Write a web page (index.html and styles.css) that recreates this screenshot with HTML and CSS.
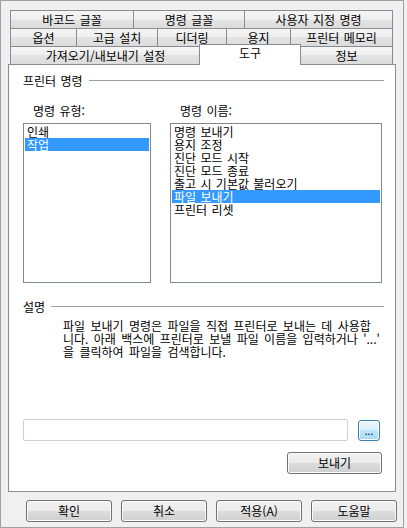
FILE: index.html
```html
<!DOCTYPE html>
<html lang="ko">
  <head>
    <meta charset="UTF-8" />
    <meta name="viewport" content="width=device-width, initial-scale=1.0" />
    <title>프린터 속성 - 도구</title>
    <link rel="stylesheet" href="styles.css">
  </head>
  <body>
    <div class="dialog">
      <div class="tabs">
        <div class="tab-row">
          <div class="tab tab-barcode">바코드 글꼴</div>
          <div class="tab tab-cmdfont">명령 글꼴</div>
          <div class="tab tab-custom">사용자 지정 명령</div>
        </div>
        <div class="tab-row">
          <div class="tab tab-options">옵션</div>
          <div class="tab tab-advanced">고급 설치</div>
          <div class="tab tab-dither">디더링</div>
          <div class="tab tab-paper">용지</div>
          <div class="tab tab-memory">프린터 메모리</div>
        </div>
        <div class="tab-row">
          <div class="tab tab-import">가져오기/내보내기 설정</div>
          <div class="tab tab-tools active">도구</div>
          <div class="tab tab-info">정보</div>
        </div>
      </div>

      <div class="panel">
        <div class="group-title">프린터 명령</div>
        <div class="commands">
          <div class="col-type">
            <div class="field-label">명령 유형:</div>
            <div class="listbox">
              <div>인쇄</div>
              <div class="selected">작업</div>
            </div>
          </div>
          <div class="col-name">
            <div class="field-label">명령 이름:</div>
            <div class="listbox">
              <div>명령 보내기</div>
              <div>용지 조정</div>
              <div>진단 모드 시작</div>
              <div>진단 모드 종료</div>
              <div>출고 시 기본값 불러오기</div>
              <div class="selected">파일 보내기</div>
              <div>프린터 리셋</div>
            </div>
          </div>
        </div>

        <div class="group-title group-desc">설명</div>
        <p class="description">파일 보내기 명령은 파일을 직접 프린터로 보내는 데 사용합<br>니다. 아래 백스에 프린터로 보낼 파일 이름을 입력하거나 '...'<br>을 클릭하여 파일을 검색합니다.</p>

        <div class="file-row">
          <div class="file-input"></div>
          <button class="btn btn-browse">...</button>
        </div>
        <div class="send-row">
          <button class="btn btn-send">보내기</button>
        </div>
      </div>

      <div class="footer">
        <button class="btn btn-footer">확인</button>
        <button class="btn btn-footer">취소</button>
        <button class="btn btn-footer">적용(A)</button>
        <button class="btn btn-footer">도움말</button>
      </div>
    </div>
  </body>
</html>
```

FILE: styles.css
```css
body {
  margin: 0;
  background: #f0f0f0;
  font-family: "Noto Sans CJK KR", "Noto Sans", sans-serif;
  font-size: 12px;
  color: #000;
}
.dialog {
  width: 404px;
  height: 528px;
  box-sizing: border-box;
  border: 1px solid #a0a0a0;
  padding: 9px 7px 0 7px;
  background: #f0f0f0;
}

/* tabs */
.tabs {
  margin: 0 3px 0 2px;
}
.tab-row {
  display: flex;
  height: 18px;
}
.tab {
  box-sizing: border-box;
  height: 18px;
  margin-left: -1px;
  border: 1px solid #898c95;
  border-bottom: none;
  background: linear-gradient(#f5f5f5, #eeeeee 50%, #e3e3e3 50%, #dcdcdc);
  text-align: center;
  line-height: 17px;
  white-space: nowrap;
  word-spacing: 1px;
}
.tab:first-child {
  margin-left: 0;
}
.tab-barcode { width: 124px; }
.tab-cmdfont { width: 112px; }
.tab-custom { width: 149px; }
.tab-options { width: 67px; }
.tab-advanced { width: 82px; }
.tab-dither { width: 70px; }
.tab-paper { width: 65px; }
.tab-memory { width: 103px; }
.tab-import { width: 191px; }
.tab-tools { width: 102px; }
.tab-info { width: 93px; }
.tab.active {
  position: relative;
  top: 1px;
  z-index: 1;
  align-self: flex-end;
  height: 21px;
  margin-left: -2px;
  background: #fff;
  line-height: 15px;
}

/* panel */
.panel {
  box-sizing: border-box;
  height: 428px;
  border: 1px solid #898c95;
  background: #fff;
  padding: 9px 11px 0 14px;
}
.group-title {
  display: flex;
  align-items: center;
  height: 13px;
  line-height: 13px;
  white-space: nowrap;
  word-spacing: 1px;
}
.group-title::after {
  content: "";
  flex: 1;
  margin-left: 6px;
  border-top: 1px solid #a0a0a0;
}
.commands {
  display: flex;
  gap: 19px;
  margin-top: 17px;
}
.col-type {
  width: 128px;
}
.col-name {
  width: 212px;
}
.field-label {
  height: 13px;
  line-height: 13px;
  padding-left: 10px;
  margin-bottom: 6px;
  word-spacing: 1px;
}
.listbox {
  box-sizing: border-box;
  height: 160px;
  padding: 1px;
  border: 1px solid #828790;
}
.listbox div {
  height: 13px;
  line-height: 13px;
  padding-left: 2px;
  white-space: nowrap;
  word-spacing: 1px;
}
.listbox .selected {
  background: #3399ff;
  color: #fff;
}
.group-desc {
  margin-top: 17px;
}
.description {
  margin: 6px 0 0 0;
  padding-left: 40px;
  line-height: 13px;
  white-space: nowrap;
  word-spacing: 2px;
}

/* file + send */
.file-row {
  display: flex;
  align-items: flex-start;
  margin-top: 61px;
}
.file-input {
  box-sizing: border-box;
  width: 325px;
  height: 22px;
  border: 1px solid #d0d0d0;
  border-radius: 2px;
  background: #fff;
}
.btn {
  box-sizing: border-box;
  padding: 0;
  border: 1px solid #707070;
  border-radius: 3px;
  background: linear-gradient(#f2f2f2, #ebebeb 50%, #dddddd 50%, #cfcfcf);
  box-shadow: inset 0 0 0 1px #fbfbfb;
  font: inherit;
  color: #000;
  text-align: center;
  line-height: 18px;
}
.btn-browse {
  width: 22px;
  height: 21px;
  margin: 1px 0 0 10px;
  border-color: #3c7fb1;
  background: linear-gradient(#eaf6fd, #d9f0fc 50%, #bee6fd 50%, #a7d9f5);
  font-size: 10px;
  line-height: 16px;
}
.send-row {
  display: flex;
  justify-content: flex-end;
  margin: 11px 2px 0 0;
}
.btn-send {
  width: 95px;
  height: 22px;
}

/* footer */
.footer {
  display: flex;
  justify-content: flex-end;
  gap: 9px;
  margin: 8px -1px 0 0;
}
.btn-footer {
  width: 86px;
  height: 22px;
}
```
